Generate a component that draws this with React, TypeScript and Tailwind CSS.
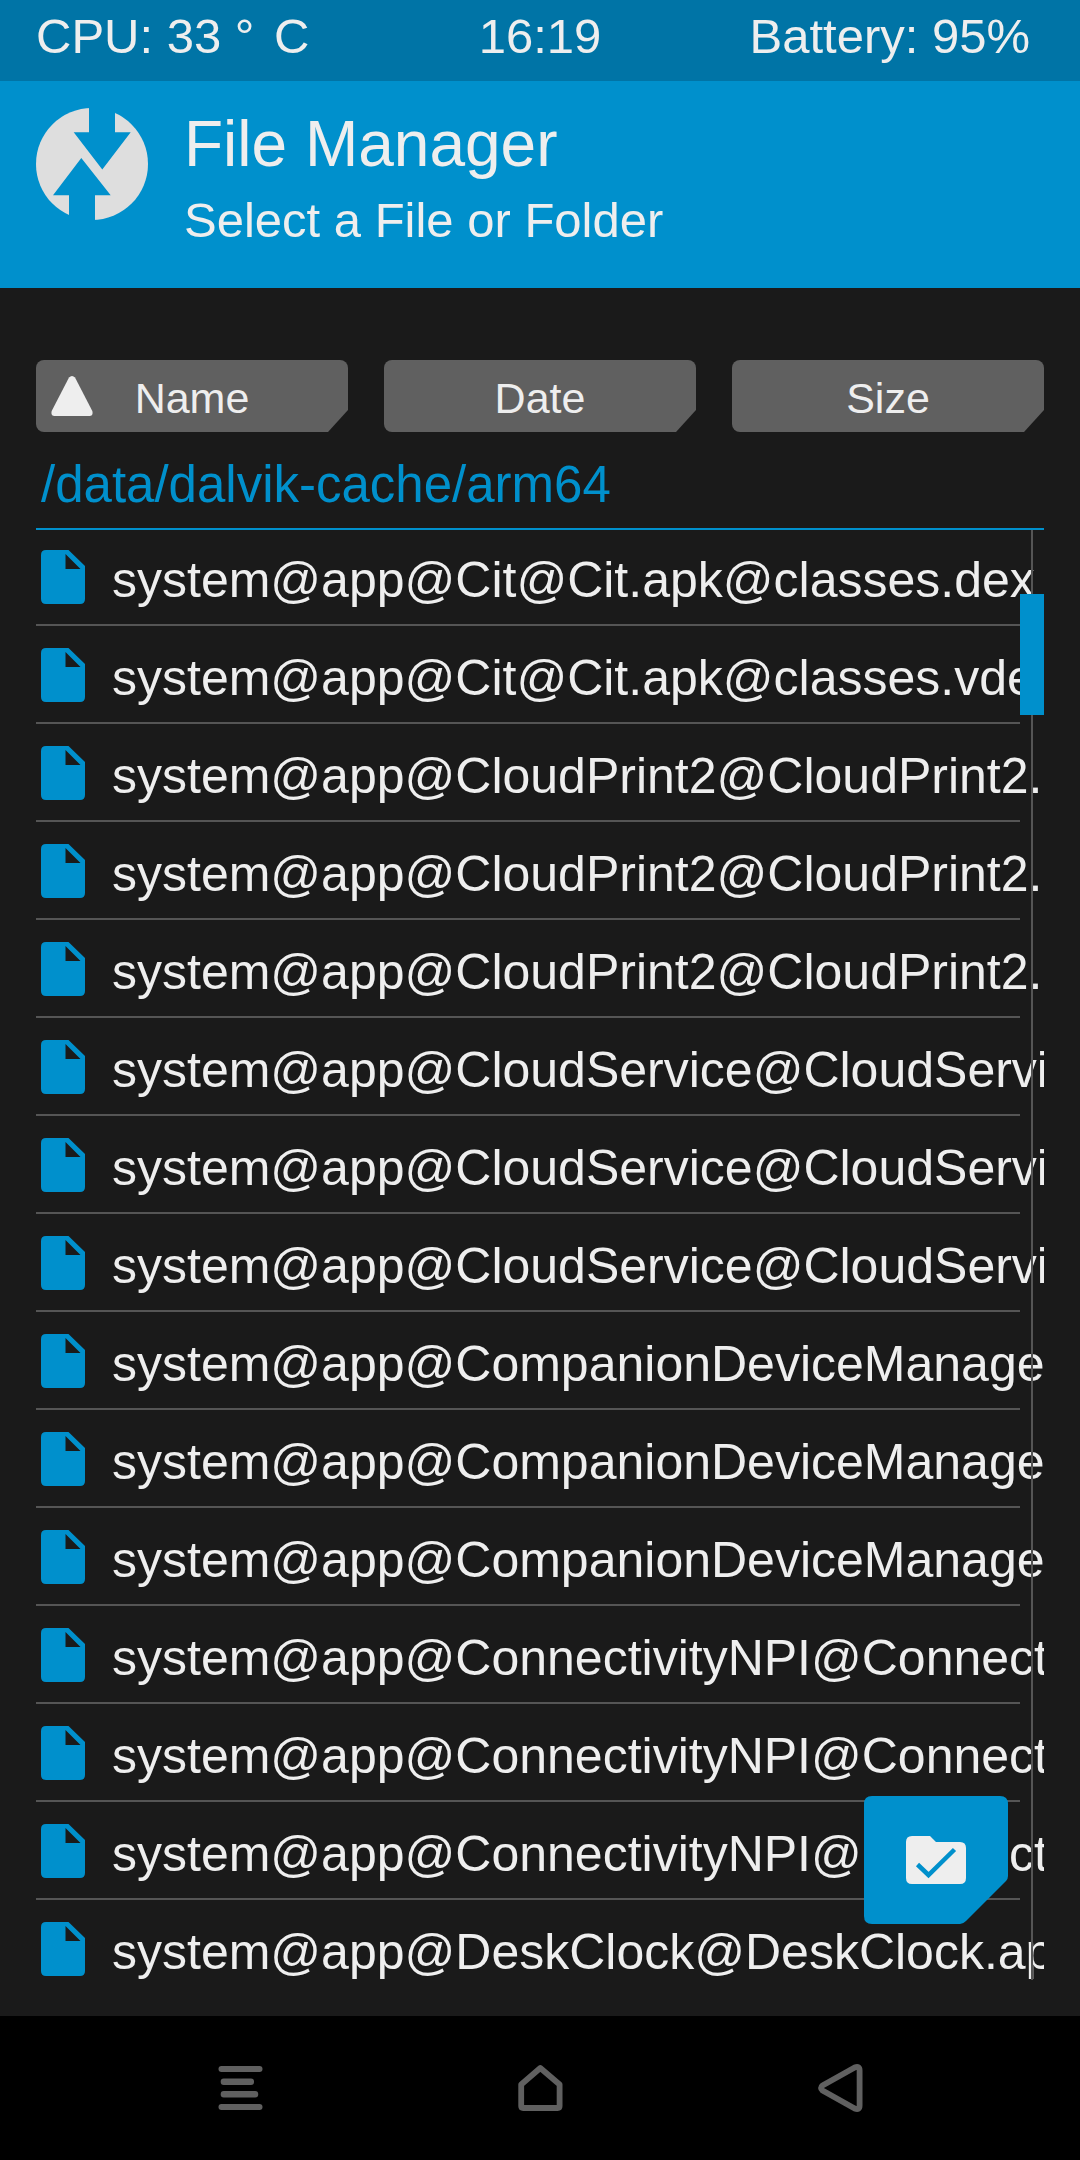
import React, { useState } from 'react'

const files = [
    'system@app@Cit@Cit.apk@classes.dex',
    'system@app@Cit@Cit.apk@classes.vdex',
    'system@app@CloudPrint2@CloudPrint2.apk@classes.art',
    'system@app@CloudPrint2@CloudPrint2.apk@classes.dex',
    'system@app@CloudPrint2@CloudPrint2.apk@classes.vdex',
    'system@app@CloudService@CloudService.apk@classes.art',
    'system@app@CloudService@CloudService.apk@classes.dex',
    'system@app@CloudService@CloudService.apk@classes.vdex',
    'system@app@CompanionDeviceManager@CompanionDeviceManager.apk@classes.art',
    'system@app@CompanionDeviceManager@CompanionDeviceManager.apk@classes.dex',
    'system@app@CompanionDeviceManager@CompanionDeviceManager.apk@classes.vdex',
    'system@app@ConnectivityNPI@ConnectivityNPI.apk@classes.art',
    'system@app@ConnectivityNPI@ConnectivityNPI.apk@classes.dex',
    'system@app@ConnectivityNPI@ConnectivityNPI.apk@classes.vdex',
    'system@app@DeskClock@DeskClock.apk@classes.dex',
]

const sortKeys = ['Name', 'Date', 'Size']

function Logo() {
    return (
        <svg viewBox="0 0 112 112" className="size-28 shrink-0" aria-hidden="true">
            <circle cx="56" cy="56" r="56" fill="#dedede" />
            <path fill="#0090cc" d="M53 -1H79V24.3H94.7L66.3 61.5L37.7 24.3H53Z" />
            <path fill="#0090cc" d="M45.3 50L74.7 87.3H59V113H33V87.3H17Z" />
        </svg>
    )
}

function FileIcon() {
    return (
        <svg viewBox="0 0 44 54" className="h-[54px] w-11 shrink-0" fill="#0090cc" aria-hidden="true">
            <path
                fillRule="evenodd"
                d="M5 0H27.5L44 16V49Q44 54 39 54H5Q0 54 0 49V5Q0 0 5 0ZM24.5 4V19H39.5Z"
            />
        </svg>
    )
}

function StatusBar() {
    return (
        <div className="grid h-[81px] grid-cols-3 items-center bg-[#0074a6] px-9 pb-2.5 text-[49px] leading-[60px] whitespace-nowrap">
            <span>CPU: 33 <span className="pr-1.5">°</span> C</span>
            <span className="text-center">16:19</span>
            <span className="pr-3.5 text-right">Battery: 95%</span>
        </div>
    )
}

function NavBar() {
    return (
        <nav className="grid h-36 shrink-0 grid-cols-3 items-center justify-items-center bg-black px-[90px]">
            <button aria-label="Menu">
                <svg viewBox="0 0 48 48" className="size-12" fill="#606060">
                    <rect x="2.5" y="2" width="44" height="6" rx="3" />
                    <rect x="4.7" y="14.5" width="33.3" height="6.5" rx="3" />
                    <rect x="4.7" y="27" width="37.5" height="6.5" rx="3" />
                    <rect x="2.5" y="40" width="44" height="6" rx="3" />
                </svg>
            </button>
            <button aria-label="Home">
                <svg viewBox="0 0 48 48" className="size-12" fill="none" stroke="#606060" strokeLinejoin="round">
                    <path strokeWidth="5.8" d="M24.3 4L43.6 20.5V42Q43.6 44 41.6 44H7.2Q5.2 44 5.2 42V20.5Z" />
                </svg>
            </button>
            <button aria-label="Back">
                <svg viewBox="0 0 48 48" className="size-12" fill="none" stroke="#606060" strokeLinejoin="round">
                    <path strokeWidth="5.8" d="M38.7 3.5Q43.6 1.5 43.6 6.5V41.5Q43.6 46.5 38.7 44.5L6.5 26.5Q3.5 24 6.5 21.5Z" />
                </svg>
            </button>
        </nav>
    )
}

export default function App() {
    const [sortBy, setSortBy] = useState('Name')

    return (
        <div className="flex h-screen flex-col bg-[#1a1a1a] font-['Liberation_Sans',Arial,sans-serif] text-[#eeeeee]">
            <StatusBar />

            <header className="flex gap-9 bg-[#0090cc] px-9 pt-[27px] pb-10">
                <Logo />
                <div>
                    <h1 className="text-[64px] leading-[72px]">File Manager</h1>
                    <p className="mt-3 text-[49px] leading-[56px]">Select a File or Folder</p>
                </div>
            </header>

            <main className="relative flex min-h-0 flex-1 flex-col px-9 pt-[72px] pb-9">
                <div className="flex gap-9">
                    {sortKeys.map((key) => (
                        <button
                            key={key}
                            onClick={() => setSortBy(key)}
                            className="relative h-[72px] flex-1 rounded-lg bg-[#606060] pt-1 text-[43px] leading-[52px] [clip-path:polygon(0_0,100%_0,100%_calc(100%-22px),calc(100%-20px)_100%,0_100%)]"
                        >
                            {sortBy === key && (
                                <svg viewBox="0 0 42 40" className="absolute top-4 left-[15px] h-10 w-[42px]" fill="#eeeeee" aria-hidden="true">
                                    <path d="M18 1.5Q21 -1.5 24 1.5L41.3 35Q42.5 40 38.5 40H3.5Q-0.5 40 0.7 35Z" />
                                </svg>
                            )}
                            {key}
                        </button>
                    ))}
                </div>

                <div className="h-[98px] shrink-0 border-b-2 border-[#0090cc] pt-2 pl-[5px] text-[51px] leading-[90px] text-[#0090cc]">
                    /data/dalvik-cache/arm64
                </div>

                <div className="relative min-h-0 flex-1 overflow-hidden">
                    {/* first row tucks under the path border */}
                    <ul className="-mt-0.5">
                        {files.map((name) => (
                            <li key={name} className="flex h-[98px] flex-col">
                                <button className="flex flex-1 items-center gap-[27px] pt-0.5 pl-[5px] text-left">
                                    <FileIcon />
                                    <span className="pt-1.5 text-[50px] leading-[60px] whitespace-nowrap">{name}</span>
                                </button>
                                <div className="mr-6 h-0.5 bg-[#555555]" />
                            </li>
                        ))}
                    </ul>

                    {/* scroll track and thumb */}
                    <div className="absolute inset-y-0 right-0 flex w-6 flex-col items-center">
                        <div className="h-16 w-0.5 bg-[#555555]" />
                        <div className="h-[121px] w-6 bg-[#0090cc]" />
                        <div className="w-0.5 flex-1 bg-[#555555]" />
                    </div>
                </div>

                <button aria-label="Select files" className="absolute right-[72px] bottom-[92px]">
                    <svg viewBox="0 0 144 128" className="h-32 w-36">
                        <path fill="#0090cc" d="M8 0H136Q144 0 144 8V80Q144 83 142 85L102 125Q99 128 96 128H8Q0 128 0 120V8Q0 0 8 0Z" />
                        <path fill="#eeeeee" d="M48 40H66L72 46H96Q102 46 102 52V82Q102 88 96 88H48Q42 88 42 82V46Q42 40 48 40Z" />
                        <path fill="none" stroke="#0090cc" strokeWidth="4.5" d="M53.5 68.5L64.5 79L90.5 53.5" />
                    </svg>
                </button>
            </main>

            <NavBar />
        </div>
    )
}
